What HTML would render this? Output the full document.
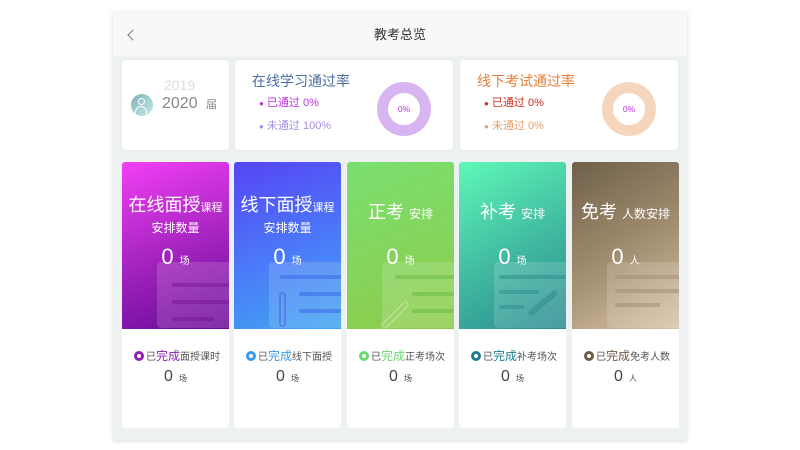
<!DOCTYPE html><html><head><meta charset="utf-8"><style>
*{margin:0;padding:0;box-sizing:border-box}
body{width:800px;height:450px;background:#fff;font-family:"Liberation Sans","Noto Sans CJK SC",sans-serif;position:relative;overflow:hidden}
.panel{position:absolute;left:113px;top:12px;width:574px;height:428px;background:#eef1f2;box-shadow:0 1px 4px rgba(0,0,0,.15)}
.hdr{position:absolute;left:0;top:0;width:574px;height:44px;background:#f7f8f8;text-align:center;line-height:46px;font-size:13px;color:#333}
.back{position:absolute;left:16px;top:19px;width:8px;height:8px;border-left:1.5px solid #777;border-bottom:1.5px solid #777;transform:rotate(45deg)}
.box{position:absolute;background:#fff;border-radius:3px;box-shadow:0 0 2px rgba(0,0,0,.08)}
.card{position:absolute;top:150px;width:107px;height:266px;background:#fff;border-radius:3px;overflow:hidden}
.top{position:absolute;left:0;top:0;width:107px;height:167px;color:#fff;text-align:center}
.t1{position:absolute;left:0;width:107px;font-size:18px;line-height:21px}
.t1 small{font-size:11px}
.t1 .s2{display:block;font-size:12px;line-height:14px;margin-top:2px}
.num{position:absolute;top:82px;left:0;width:107px;font-size:22px}
.num small{font-size:10px;margin-left:6px}
.doc{position:absolute;left:35px;top:100px;width:80px;height:66px;background:rgba(255,255,255,.15);border-radius:4px}
.bar{position:absolute;height:4px;border-radius:2px}
.lbl{position:absolute;top:185px;left:12px;font-size:10px;color:#555;white-space:nowrap}
.lbl i{display:inline-block;width:10px;height:10px;border-radius:50%;border:3px solid;vertical-align:-1px;margin-right:2px}
.lbl b{font-weight:normal;font-size:12px}
.bn{position:absolute;top:206px;left:0;width:107px;text-align:center;font-size:16px;color:#444}
.bn small{font-size:8px;margin-left:6px}
.li{position:absolute;left:24px;font-size:11px}
</style></head><body>
<div class="panel">
<div class="hdr"><div class="back"></div>教考总览</div>
<div class="box" style="left:9px;top:48px;width:107px;height:90px">
<div style="position:absolute;left:42px;top:17px;font-size:14px;color:#ddd">2019</div>
<div style="position:absolute;left:9px;top:34px;width:22px;height:22px;border-radius:50%;background:linear-gradient(135deg,#7fb0b8,#c4ede8);overflow:hidden">
<div style="position:absolute;left:7px;top:4px;width:7px;height:7px;border:1.3px solid #fff;border-radius:50%"></div>
<div style="position:absolute;left:4px;top:12px;width:12px;height:8px;border:1.3px solid #fff;border-radius:6px 6px 0 0;border-bottom:none"></div></div>
<div style="position:absolute;left:40px;top:35px;font-size:16px;color:#888">2020 <span style="font-size:11px;margin-left:4px">届</span></div>
</div>
<div class="box" style="left:122px;top:48px;width:218px;height:90px">
<div style="position:absolute;left:17px;top:11px;font-size:14px;color:#4a6fa0">在线学习通过率</div>
<div class="li" style="top:34px;color:#c030e0"><span style="font-size:8px">●</span> 已通过 0%</div>
<div class="li" style="top:57px;color:#a98ee0"><span style="font-size:8px">●</span> 未通过 100%</div>
<div style="position:absolute;left:142px;top:22px;width:54px;height:54px;border-radius:50%;border:11px solid #d9b4f2;text-align:center;line-height:32px;font-size:8.5px;color:#c030e0">0%</div>
</div>
<div class="box" style="left:347px;top:48px;width:218px;height:90px">
<div style="position:absolute;left:17px;top:11px;font-size:14px;color:#e8803a">线下考试通过率</div>
<div class="li" style="top:34px;color:#d03020"><span style="font-size:8px">●</span> 已通过 0%</div>
<div class="li" style="top:57px;color:#e0a070"><span style="font-size:8px">●</span> 未通过 0%</div>
<div style="position:absolute;left:142px;top:22px;width:54px;height:54px;border-radius:50%;border:11px solid #f5d6bc;text-align:center;line-height:32px;font-size:8.5px;color:#c030e0">0%</div>
</div>

<div class="card" style="left:9px"><div class="top" style="background:linear-gradient(160deg,#f23ff5,#9a20b8 60%,#6a0a9a)">
<div class="doc" style="left:35px"></div>
<div class="bar" style="left:50px;top:121px;width:60px;background:rgba(120,20,150,.5)"></div>
<div class="bar" style="left:50px;top:138px;width:60px;background:rgba(120,20,150,.5)"></div>
<div class="bar" style="left:50px;top:155px;width:42px;background:rgba(120,20,150,.5)"></div>
<div class="t1" style="top:33px">在线面授<small>课程</small><span class="s2">安排数量</span></div>
<div class="num">0<small>场</small></div></div>
<div class="lbl"><i style="border-color:#9020b0"></i>已<b style="color:#9020b0">完成</b>面授课时</div>
<div class="bn">0<small>场</small></div></div>

<div class="card" style="left:121px"><div class="top" style="background:linear-gradient(160deg,#5545f5,#4a80f8 60%,#3fa5f0)">
<div class="doc"></div>
<div class="bar" style="left:46px;top:113px;width:70px;background:rgba(60,110,230,.6)"></div>
<div class="bar" style="left:65px;top:130px;width:50px;background:rgba(60,110,230,.6)"></div>
<div class="bar" style="left:65px;top:147px;width:50px;background:rgba(60,110,230,.6)"></div>
<div style="position:absolute;left:45px;top:130px;width:7px;height:35px;border:2px solid rgba(80,120,230,.8);border-radius:4px"></div>
<div class="t1" style="top:33px">线下面授<small>课程</small><span class="s2">安排数量</span></div>
<div class="num">0<small>场</small></div></div>
<div class="lbl"><i style="border-color:#3a9ae8"></i>已<b style="color:#3a9ae8">完成</b>线下面授</div>
<div class="bn">0<small>场</small></div></div>

<div class="card" style="left:234px"><div class="top" style="background:linear-gradient(160deg,#7adf70,#8ecb4a)">
<div class="doc"></div>
<div class="bar" style="left:48px;top:113px;width:70px;background:rgba(110,190,70,.6)"></div>
<div class="bar" style="left:65px;top:130px;width:50px;background:rgba(110,190,70,.6)"></div>
<div class="bar" style="left:65px;top:147px;width:50px;background:rgba(110,190,70,.6)"></div>
<div style="position:absolute;left:30px;top:150px;width:36px;height:6px;border:1.5px solid rgba(255,255,255,.4);border-radius:3px;transform:rotate(-45deg)"></div>
<div class="t1" style="top:40px">正考 <small style="font-size:12px">安排</small></div>
<div class="num">0<small>场</small></div></div>
<div class="lbl"><i style="border-color:#6ad870"></i>已<b style="color:#6ad870">完成</b>正考场次</div>
<div class="bn">0<small>场</small></div></div>

<div class="card" style="left:346px"><div class="top" style="background:linear-gradient(150deg,#5ff8b8,#40b8a0 55%,#2a8a90)">
<div class="doc" style="left:35px"></div>
<div class="bar" style="left:40px;top:113px;width:70px;background:rgba(40,140,140,.5)"></div>
<div class="bar" style="left:40px;top:128px;width:40px;background:rgba(40,140,140,.5)"></div>
<div class="bar" style="left:40px;top:143px;width:25px;background:rgba(40,140,140,.5)"></div>
<div style="position:absolute;left:66px;top:138px;width:36px;height:6px;border-radius:3px;background:rgba(40,140,140,.5);transform:rotate(-40deg)"></div>
<div class="t1" style="top:40px">补考 <small style="font-size:12px">安排</small></div>
<div class="num">0<small>场</small></div></div>
<div class="lbl"><i style="border-color:#1f7f8f"></i>已<b style="color:#1f7f8f">完成</b>补考场次</div>
<div class="bn">0<small>场</small></div></div>

<div class="card" style="left:459px"><div class="top" style="background:linear-gradient(150deg,#6f604a,#a49072 55%,#d8c5a5)">
<div class="doc"></div>
<div class="bar" style="left:43px;top:113px;width:70px;background:rgba(160,140,110,.5)"></div>
<div class="bar" style="left:43px;top:127px;width:70px;background:rgba(160,140,110,.5)"></div>
<div class="bar" style="left:43px;top:141px;width:45px;background:rgba(160,140,110,.5)"></div>
<div class="t1" style="top:40px">免考 <small style="font-size:12px">人数安排</small></div>
<div class="num">0<small>人</small></div></div>
<div class="lbl"><i style="border-color:#6d5a44"></i>已<b style="color:#6d5a44">完成</b>免考人数</div>
<div class="bn">0<small>人</small></div></div>
</div>
</body></html>
